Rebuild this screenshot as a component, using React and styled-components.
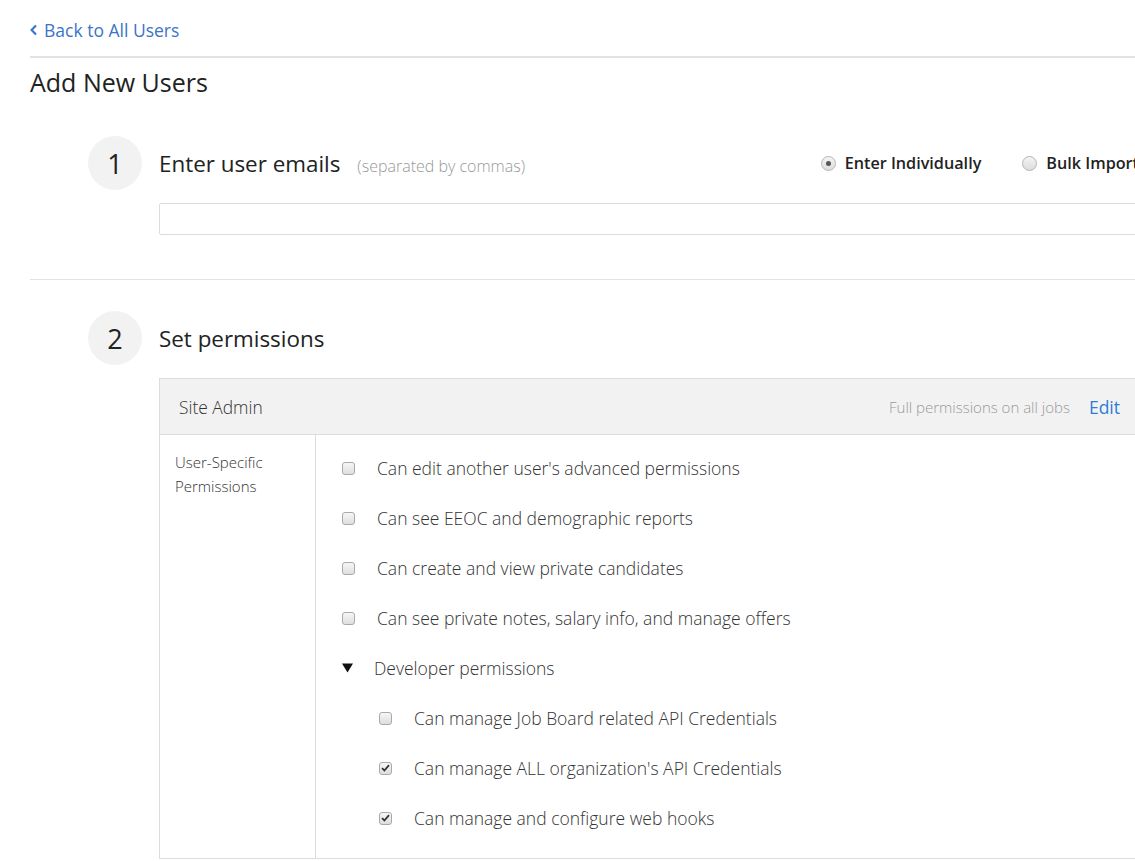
import React from "react";
import styled, { createGlobalStyle } from "styled-components";

const GlobalStyle = createGlobalStyle`
  body {
    margin: 0;
    overflow: hidden;
    background: #ffffff;
    font-family: "Open Sans", "Noto Sans", sans-serif;
    color: #333333;
  }
`;

const Page = styled.div`
  width: 1110px;
  padding: 18px 0 0 30px;
`;

const BackLink = styled.a`
  display: inline-flex;
  align-items: center;
  gap: 7px;
  font-size: 17.5px;
  line-height: 24px;
  color: #3b74c9;
  text-decoration: none;
  cursor: pointer;
`;

const Rule = styled.hr`
  border: 0;
  border-top: ${(p) => (p.$thick ? "2px" : "1px")} solid #e2e2e2;
  margin: ${(p) => p.$margin || "0"};
`;

const PageTitle = styled.h1`
  margin: 8px 0 0;
  font-size: 25px;
  line-height: 32px;
  font-weight: 400;
  color: #222;
`;

const Step = styled.section`
  padding-left: 58px;
  margin-top: ${(p) => p.$top}px;
`;

const StepHead = styled.div`
  display: flex;
  align-items: center;
  gap: 17px;
`;

const Circle = styled.div`
  width: 54px;
  height: 54px;
  border-radius: 50%;
  background: #f2f2f2;
  display: flex;
  align-items: center;
  justify-content: center;
  font-size: 27px;
  color: #222;
  flex-shrink: 0;
`;

const StepTitle = styled.h2`
  margin: 0;
  font-size: 22.4px;
  font-weight: 400;
  color: #222;
  display: flex;
  align-items: baseline;
  gap: 17px;
`;

const Hint = styled.span`
  font-size: 16px;
  font-weight: 300;
  color: #999;
`;

const RadioGroup = styled.div`
  margin-left: auto;
  margin-right: 1px;
  display: flex;
  gap: 41px;
`;

const RadioItem = styled.label`
  display: flex;
  align-items: center;
  gap: 9px;
  font-size: 16.2px;
  font-weight: 600;
  color: #222;
  white-space: nowrap;
`;

const RadioDot = styled.span`
  width: 13px;
  height: 13px;
  border-radius: 50%;
  border: 1px solid #b5b5b5;
  background: linear-gradient(#f4f4f4, #dcdcdc);
  display: flex;
  align-items: center;
  justify-content: center;
  &::after {
    content: "";
    width: 5px;
    height: 5px;
    border-radius: 50%;
    background: ${(p) => (p.$on ? "#555" : "transparent")};
  }
`;

const StepBody = styled.div`
  margin-left: 71px;
  margin-top: ${(p) => p.$top}px;
`;

const EmailInput = styled.input`
  display: block;
  box-sizing: border-box;
  width: 100%;
  height: 32px;
  border: 1px solid #dcdcdc;
  border-radius: 2px;
  outline: none;
`;

const Panel = styled.div`
  border: 1px solid #dcdcdc;
`;

const PanelHead = styled.div`
  display: flex;
  align-items: center;
  height: 55px;
  padding: 0 19px 0 19px;
  background: #f2f2f2;
  border-bottom: 1px solid #dcdcdc;
`;

const RoleName = styled.span`
  font-size: 17.4px;
  font-weight: 300;
  color: #333;
`;

const RoleInfo = styled.span`
  margin-left: auto;
  font-size: 15px;
  font-weight: 300;
  color: #999;
`;

const EditLink = styled.a`
  margin-left: 19px;
  font-size: 17.5px;
  color: #2f7bd6;
  cursor: pointer;
`;

const PanelBody = styled.div`
  display: grid;
  grid-template-columns: 156px 1fr;
`;

const SideLabel = styled.div`
  border-right: 1px solid #dcdcdc;
  padding: 15px 15px;
  font-size: 15px;
  line-height: 24px;
  font-weight: 300;
  color: #333;
`;

const PermList = styled.div`
  padding: 8px 0 15px 26px;
`;

const PermRow = styled.label`
  display: flex;
  align-items: center;
  height: 50px;
  padding-left: ${(p) => (p.$nested ? 37 : 0)}px;
  gap: ${(p) => (p.$toggle ? 21 : 22)}px;
  font-size: 17.5px;
  font-weight: 300;
  color: #333;
  white-space: nowrap;
`;

const Box = styled.span`
  box-sizing: border-box;
  width: 13px;
  height: 13px;
  border: 1px solid #a9a9a9;
  border-radius: 3px;
  background: linear-gradient(#f6f6f6, #dedede);
  display: flex;
  align-items: center;
  justify-content: center;
  flex-shrink: 0;
`;

const Check = ({ on }) => (
  <Box>
    {on && (
      <svg width="9" height="8" viewBox="0 0 9 8">
        <path d="M1 4.2 L3.4 6.5 L8 1.2" fill="none" stroke="#333" strokeWidth="1.8" />
      </svg>
    )}
  </Box>
);

const Caret = () => (
  <svg width="11" height="10" viewBox="0 0 11 10" style={{ flexShrink: 0 }}>
    <path d="M0 0.5 H11 L5.5 9.5 Z" fill="#111" />
  </svg>
);

const perms = [
  "Can edit another user's advanced permissions",
  "Can see EEOC and demographic reports",
  "Can create and view private candidates",
  "Can see private notes, salary info, and manage offers",
];

const devPerms = [
  { label: "Can manage Job Board related API Credentials", on: false },
  { label: "Can manage ALL organization's API Credentials", on: true },
  { label: "Can manage and configure web hooks", on: true },
];

export default function App() {
  return (
    <Page>
      <GlobalStyle />
      <BackLink>
        <svg width="7" height="12" viewBox="0 0 7 12">
          <path d="M6 1.5 L1.6 6 L6 10.5" fill="none" stroke="#3b74c9" strokeWidth="2.2" />
        </svg>
        Back to All Users
      </BackLink>
      <Rule $thick $margin="14px 0 0" />
      <PageTitle>Add New Users</PageTitle>

      <Step $top={38}>
        <StepHead>
          <Circle>1</Circle>
          <StepTitle>
            Enter user emails <Hint>(separated by commas)</Hint>
          </StepTitle>
          <RadioGroup>
            <RadioItem>
              <RadioDot $on />
              Enter Individually
            </RadioItem>
            <RadioItem>
              <RadioDot />
              Bulk Import
            </RadioItem>
          </RadioGroup>
        </StepHead>
        <StepBody $top={13}>
          <EmailInput />
        </StepBody>
      </Step>

      <Rule $margin="44px 0 0" />

      <Step $top={31}>
        <StepHead>
          <Circle>2</Circle>
          <StepTitle>Set permissions</StepTitle>
        </StepHead>
        <StepBody $top={13}>
          <Panel>
            <PanelHead>
              <RoleName>Site Admin</RoleName>
              <RoleInfo>Full permissions on all jobs</RoleInfo>
              <EditLink>Edit</EditLink>
            </PanelHead>
            <PanelBody>
              <SideLabel>
                User-Specific
                <br />
                Permissions
              </SideLabel>
              <PermList>
                {perms.map((p) => (
                  <PermRow key={p}>
                    <Check />
                    {p}
                  </PermRow>
                ))}
                <PermRow $toggle>
                  <Caret />
                  Developer permissions
                </PermRow>
                {devPerms.map((p) => (
                  <PermRow key={p.label} $nested>
                    <Check on={p.on} />
                    {p.label}
                  </PermRow>
                ))}
              </PermList>
            </PanelBody>
          </Panel>
        </StepBody>
      </Step>
    </Page>
  );
}
